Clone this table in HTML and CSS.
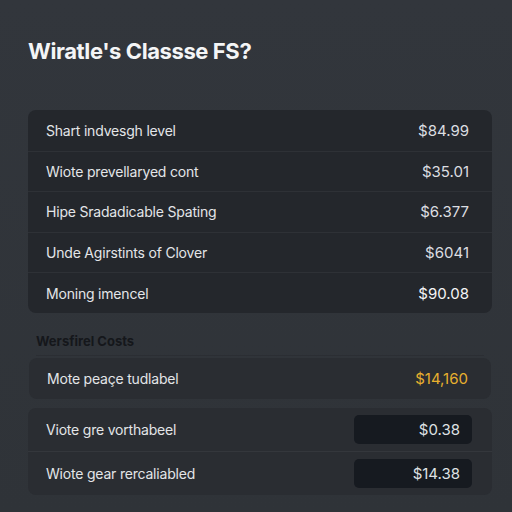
FILE: index.html
```html
<!DOCTYPE html>
<html>
<head>
<meta charset="utf-8">
<link rel="stylesheet" href="styles.css">
</head>
<body>
<main class="page">
  <h1 class="title">Wiratle's Classse FS?</h1>
  <section class="card card-main">
    <div class="row"><span class="label">Shart indvesgh level</span><span class="value">$84.99</span></div>
    <div class="row"><span class="label">Wiote prevellaryed cont</span><span class="value">$35.01</span></div>
    <div class="row"><span class="label">Hipe Sradadicable Spating</span><span class="value">$6.377</span></div>
    <div class="row"><span class="label">Unde Agirstints of Clover</span><span class="value">$6041</span></div>
    <div class="row"><span class="label">Moning imencel</span><span class="value value-strong">$90.08</span></div>
  </section>
  <h2 class="section-title">Wersfirel Costs</h2>
  <section class="card card-single">
    <div class="row"><span class="label">Mote peaçe tudlabel</span><span class="value value-gold">$14,160</span></div>
  </section>
  <section class="card card-boxes">
    <div class="row row-box"><span class="label">Viote gre vorthabeel</span><span class="value-box">$0.38</span></div>
    <div class="row row-box"><span class="label">Wiote gear rercaliabled</span><span class="value-box">$14.38</span></div>
  </section>
</main>
</body>
</html>
```
FILE: styles.css
```css
* { box-sizing: border-box; }
html, body { margin: 0; padding: 0; }
body {
  width: 512px;
  height: 512px;
  overflow: hidden;
  background: linear-gradient(180deg, #32363c 0%, #2f3338 100%);
  font-family: Inter, "Liberation Sans", sans-serif;
  color: #e4e6e9;
}
.page {
  padding: 37px 20px 0 28px;
  display: flex;
  flex-direction: column;
}
.title {
  margin: 0 0 45px 0;
  font-size: 22px;
  line-height: 28px;
  font-weight: 700;
  color: #f4f5f6;
  letter-spacing: -0.4px;
}
.card {
  border-radius: 8px;
  display: flex;
  flex-direction: column;
}
.card-main {
  background: #24272c;
}
.row {
  display: flex;
  justify-content: space-between;
  align-items: center;
  height: 40.6px;
  padding: 0 23px 0 18px;
  font-size: 14px;
}
.card-main .row + .row {
  border-top: 1px solid #2e3136;
}
.label { color: #e3e5e8; letter-spacing: -0.2px; }
.value { color: #dcdee1; font-size: 15px; }
.value-strong { color: #f4f5f6; }
.value-gold { color: #e8b02e; }
.section-title {
  margin: 20px 8px 2px 8px;
  font-size: 13px;
  line-height: 16px;
  font-weight: 700;
  color: #15171b;
  padding-bottom: 6px;
  border-bottom: 1px solid #2b2e33;
}
.card-single {
  background: #2a2d32;
  margin: 0 1px;
  height: 41px;
  justify-content: center;
}
.card-boxes {
  background: #2a2d32;
  margin-top: 9px;
}
.row-box {
  height: 43.5px;
  padding-right: 20px;
}
.row-box + .row-box { border-top: 1px solid #34373c; }
.value-box {
  width: 118px;
  height: 29px;
  background: #161a20;
  border-radius: 5px;
  display: flex;
  align-items: center;
  justify-content: flex-end;
  padding-right: 12px;
  font-size: 15px;
  color: #dfe1e4;
}
```
